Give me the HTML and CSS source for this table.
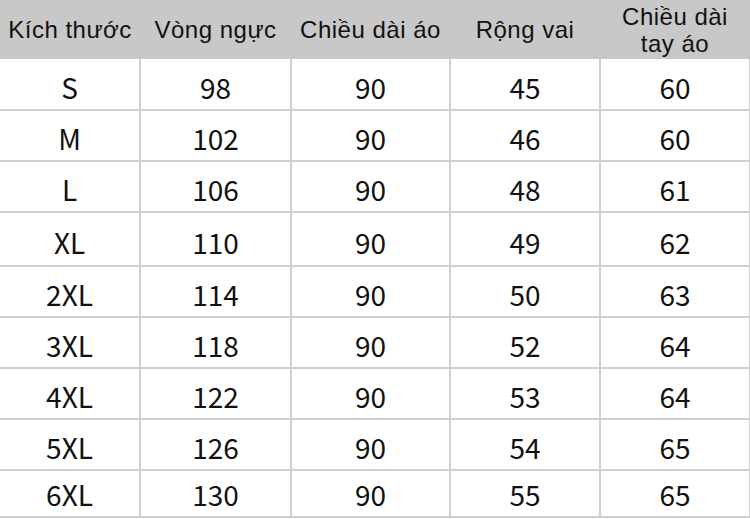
FILE: index.html
```html
<!DOCTYPE html>
<html lang="vi">
<head>
<meta charset="utf-8">
<title>Bảng kích thước</title>
<link rel="stylesheet" href="styles.css">
</head>
<body>
<table class="size-table">
  <colgroup>
    <col class="c1"><col class="c2"><col class="c3"><col class="c4"><col class="c5">
  </colgroup>
  <thead>
    <tr class="head-row">
      <th>Kích thước</th>
      <th>Vòng ngực</th>
      <th>Chiều dài áo</th>
      <th>Rộng vai</th>
      <th class="two-line">Chiều dài<br>tay áo</th>
    </tr>
  </thead>
  <tbody>
    <tr><td>S</td><td>98</td><td>90</td><td>45</td><td>60</td></tr>
    <tr><td>M</td><td>102</td><td>90</td><td>46</td><td>60</td></tr>
    <tr><td>L</td><td>106</td><td>90</td><td>48</td><td>61</td></tr>
    <tr class="tall"><td>XL</td><td>110</td><td>90</td><td>49</td><td>62</td></tr>
    <tr><td>2XL</td><td>114</td><td>90</td><td>50</td><td>63</td></tr>
    <tr><td>3XL</td><td>118</td><td>90</td><td>52</td><td>64</td></tr>
    <tr><td>4XL</td><td>122</td><td>90</td><td>53</td><td>64</td></tr>
    <tr><td>5XL</td><td>126</td><td>90</td><td>54</td><td>65</td></tr>
    <tr class="last"><td>6XL</td><td>130</td><td>90</td><td>55</td><td>65</td></tr>
  </tbody>
</table>
</body>
</html>
```
FILE: styles.css
```css
html, body {
  margin: 0;
  padding: 0;
  background: #ffffff;
}

.size-table {
  width: 750px;
  table-layout: fixed;
  border-collapse: collapse;
  border-spacing: 0;
  color: #111111;
}

.c1 { width: 140px; }
.c2 { width: 151px; }
.c3 { width: 159px; }
.c4 { width: 150px; }
.c5 { width: 150px; }

.head-row th {
  height: 59px;
  padding: 0;
  background: #c8c8c8;
  font-family: "Liberation Sans", Arial, sans-serif;
  font-size: 24px;
  letter-spacing: 0.5px;
  font-weight: normal;
  text-align: center;
  vertical-align: middle;
  line-height: 27px;
  border: none;
}

.size-table td {
  height: 51px;
  padding: 5px 0 0 0;
  box-sizing: border-box;
  font-family: "Noto Sans CJK SC", "Noto Sans", sans-serif;
  font-size: 28px;
  line-height: 30px;
  text-align: center;
  vertical-align: middle;
  border-right: 2px solid #cfcfcf;
  border-bottom: 2px solid #cfcfcf;
}

.size-table tr.tall td {
  height: 54px;
}

.size-table tr.last td {
  height: 47px;
  padding-top: 0;
}
```
